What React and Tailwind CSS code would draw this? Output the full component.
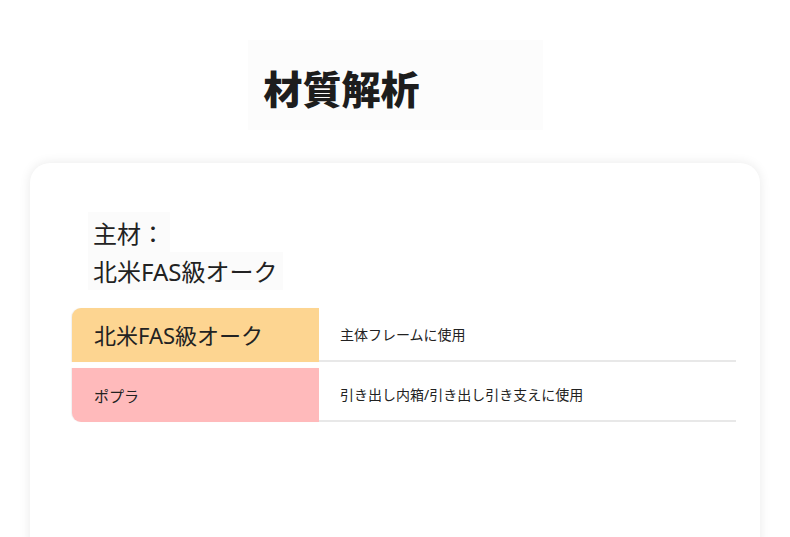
const rows = [
  {
    name: '北米FAS級オーク',
    use: '主体フレームに使用',
    cell: 'bg-[#fdd591] rounded-tl-[9px] text-[22px]',
  },
  {
    name: 'ポプラ',
    use: '引き出し内箱/引き出し引き支えに使用',
    cell: 'bg-[#ffbabb] rounded-bl-[9px] text-[15px] pt-[3px]',
  },
];

const App = () => {
  return (
    <div
      className="h-[537px] overflow-hidden bg-white text-[#222]"
      style={{ fontFamily: '"Noto Sans", "Noto Sans CJK JP", sans-serif' }}
    >
      <div className="flex justify-center pt-[40px]">
        <div className="w-[295px] h-[90px] bg-[#fcfcfc] flex items-center pl-[16px] pt-[6px]">
          <h1 className="text-[39px] font-black leading-none text-[#1d1d1d]">材質解析</h1>
        </div>
      </div>

      <div className="mx-[30px] mt-[33px] h-[400px] rounded-[20px] bg-white shadow-[0_0_12px_rgba(0,0,0,0.09)] pt-[49px]">
        <div className="pl-[58px] flex flex-col items-start">
          <div className="bg-[#fbfbfb] px-[5px] h-[40px] flex items-center pt-[3px] text-[24px] leading-none">主材：</div>
          <div className="bg-[#fbfbfb] px-[5px] h-[38px] flex items-center pt-[2px] text-[24px] leading-none">
            北米FAS級オーク
          </div>
        </div>

        <div className="ml-[42px] w-[664px] mt-[18px] flex flex-col gap-[6px]">
          {rows.map((r) => (
            <div key={r.name} className="flex h-[54px]">
              <div
                className={`w-[247px] flex items-center px-[22px] shadow-[-1px_0_1px_rgba(0,0,0,0.06)] ${r.cell}`}
              >
                {r.name}
              </div>
              <div className="flex-1 flex items-center px-[21px] text-[14px] border-b-2 border-[#e8e8e8]">
                {r.use}
              </div>
            </div>
          ))}
        </div>
      </div>
    </div>
  );
};

export default App;
